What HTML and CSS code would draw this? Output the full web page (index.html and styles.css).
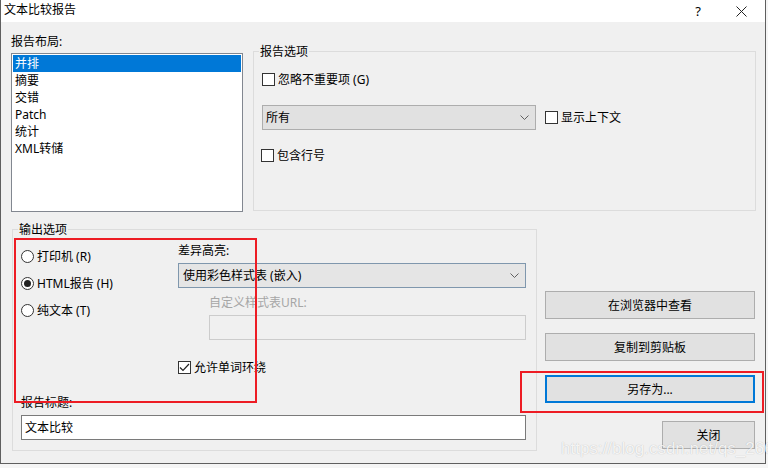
FILE: index.html
```html
<!DOCTYPE html>
<html lang="zh-CN">

<head>
    <meta charset="UTF-8">
    <meta name="viewport" content="width=device-width, initial-scale=1.0">
    <title>文本比较报告</title>
    <link rel="stylesheet" href="styles.css">
</head>

<body>
    <div class="screen">
        <div class="window">
            <!-- 标题栏 -->
            <div class="titlebar">
                <span class="title">文本比较报告</span>
                <span class="tb-btn help">?</span>
                <span class="tb-btn close">
                    <svg width="11" height="11" viewBox="0 0 11 11">
                        <path d="M0.5 0.5 L10.5 10.5 M10.5 0.5 L0.5 10.5" stroke="#222" stroke-width="1" fill="none" />
                    </svg>
                </span>
            </div>

            <div class="body">
                <!-- 上半部分 -->
                <div class="top">
                    <div class="layout-col">
                        <div class="label">报告布局:</div>
                        <ul class="listbox">
                            <li class="selected">并排</li>
                            <li>摘要</li>
                            <li>交错</li>
                            <li>Patch</li>
                            <li>统计</li>
                            <li>XML转储</li>
                        </ul>
                    </div>

                    <fieldset class="group report-opts">
                        <legend>报告选项</legend>
                        <div class="check-row first">
                            <span class="box"></span>
                            <span>忽略不重要项 (G)</span>
                        </div>
                        <div class="combo-row">
                            <div class="combo combo-all">
                                <span>所有</span>
                                <svg class="chev" width="9" height="5" viewBox="0 0 9 5">
                                    <path d="M0.5 0.5 L4.5 4.5 L8.5 0.5" stroke="#606060" fill="none" />
                                </svg>
                            </div>
                            <div class="check-row">
                                <span class="box"></span>
                                <span>显示上下文</span>
                            </div>
                        </div>
                        <div class="check-row lineno">
                            <span class="box"></span>
                            <span>包含行号</span>
                        </div>
                    </fieldset>
                </div>

                <!-- 下半部分 -->
                <div class="bottom">
                    <fieldset class="group output-opts">
                        <legend>输出选项</legend>
                        <div class="out-grid">
                            <div class="radios">
                                <div class="radio-row">
                                    <span class="radio"></span>
                                    <span>打印机 (R)</span>
                                </div>
                                <div class="radio-row">
                                    <span class="radio on"></span>
                                    <span>HTML报告 (H)</span>
                                </div>
                                <div class="radio-row">
                                    <span class="radio"></span>
                                    <span>纯文本 (T)</span>
                                </div>
                            </div>
                            <div class="highlight">
                                <div class="label">差异高亮:</div>
                                <div class="combo combo-style">
                                    <span>使用彩色样式表 (嵌入)</span>
                                    <svg class="chev" width="9" height="5" viewBox="0 0 9 5">
                                        <path d="M0.5 0.5 L4.5 4.5 L8.5 0.5" stroke="#606060" fill="none" />
                                    </svg>
                                </div>
                                <div class="label disabled indent">自定义样式表URL:</div>
                                <div class="textbox disabled-box indent"></div>
                                <div class="check-row wrap">
                                    <span class="box">
                                        <svg width="11" height="11" viewBox="0 0 11 11">
                                            <path d="M1 5.5 L4 8.5 L10 2" stroke="#222" stroke-width="1.2" fill="none" />
                                        </svg>
                                    </span>
                                    <span>允许单词环绕</span>
                                </div>
                            </div>
                        </div>
                        <div class="label title-label">报告标题:</div>
                        <div class="textbox">文本比较</div>
                    </fieldset>

                    <div class="buttons">
                        <div class="btn">在浏览器中查看</div>
                        <div class="btn">复制到剪贴板</div>
                        <div class="btn default">另存为...</div>
                        <div class="btn close-btn">关闭</div>
                    </div>
                </div>
            </div>
        </div>

        <!-- 红框标注 -->
        <div class="mark mark-left"></div>
        <div class="mark mark-right"></div>
        <div class="watermark">https://blog.csdn.net/qs_266</div>
    </div>
</body>

</html>
```

FILE: styles.css
```css
* {
    margin: 0;
    padding: 0;
    box-sizing: border-box;
}

html,
body {
    background-color: #f5f5f5;
}

body {
    font-family: "Segoe UI", "Noto Sans", "Noto Sans CJK SC", sans-serif;
    font-size: 12px;
    line-height: 17px;
    color: #000;
}

.screen {
    position: relative;
    width: 768px;
    height: 468px;
}

.window {
    width: 766px;
    border-left: 1px solid #5f5f5f;
    border-right: 1px solid #5f5f5f;
    border-bottom: 1px solid #5f5f5f;
}

/* 标题栏 */
.titlebar {
    height: 22px;
    background-color: #fff;
    display: flex;
    align-items: center;
}

.title {
    padding-left: 3px;
    margin-top: -4px;
}

.tb-btn {
    width: 46px;
    height: 22px;
    display: flex;
    align-items: center;
    justify-content: center;
}

.help {
    margin-left: auto;
    padding-left: 4px;
    font-size: 13px;
}

.close {
    padding-right: 2px;
}

.body {
    height: 441px;
    background-color: #f0f0f0;
    padding-top: 11px;
}

.label {
    height: 17px;
}

/* 上半部分 */
.top {
    display: grid;
    grid-template-columns: 232px 503px;
    column-gap: 10px;
    margin-left: 10px;
}

.layout-col .label {
    margin-bottom: 3px;
}

.listbox {
    height: 159px;
    background-color: #fff;
    border: 1px solid #828790;
    padding: 1px;
}

.listbox li {
    list-style: none;
    height: 17px;
    padding-left: 2px;
}

.listbox li.selected {
    background-color: #0078d7;
    color: #fff;
}

.group {
    border: 1px solid #dcdcdc;
    min-width: 0;
}

.group legend {
    padding: 0 1px;
    margin-left: -3px;
    line-height: 17px;
}

.report-opts {
    margin-top: 10px;
    height: 168px;
    padding: 0 8px;
}

.check-row {
    display: flex;
    align-items: center;
    height: 17px;
    gap: 3px;
}

.check-row.first {
    margin-top: 11px;
}

.check-row.lineno {
    margin-top: 17px;
    margin-left: -1px;
}

.box {
    width: 13px;
    height: 13px;
    border: 1px solid #333;
    background-color: #fff;
    display: flex;
    align-items: center;
    justify-content: center;
}

.combo-row {
    display: flex;
    align-items: center;
    gap: 9px;
    margin-top: 17px;
}

.combo {
    height: 25px;
    display: flex;
    align-items: center;
    justify-content: space-between;
    padding: 0 6px 0 3px;
}

.combo-all {
    width: 274px;
    background-color: #e1e1e1;
    border: 1px solid #adadad;
}

.combo-style {
    background-color: #e5e5e5;
    border: 1px solid #7f97ad;
    padding-left: 4px;
    margin-top: 4px;
}

/* 下半部分 */
.bottom {
    display: grid;
    grid-template-columns: 525px 210px;
    column-gap: 8px;
    margin-left: 11px;
    margin-top: 9px;
}

.output-opts {
    height: 230px;
    padding: 0 10px 9px 8px;
}

.out-grid {
    display: grid;
    grid-template-columns: 157px 1fr;
    margin-top: 4px;
}

.radios {
    padding-top: 6px;
}

.radio-row {
    display: flex;
    align-items: center;
    height: 17px;
    gap: 3px;
    margin-bottom: 10px;
}

.radio {
    width: 13px;
    height: 13px;
    border: 1px solid #333;
    border-radius: 50%;
    background-color: #fff;
    display: flex;
    align-items: center;
    justify-content: center;
}

.radio.on::after {
    content: "";
    width: 7px;
    height: 7px;
    border-radius: 50%;
    background-color: #222;
}

.indent {
    margin-left: 31px;
}

.label.disabled {
    color: #a6a6a6;
    margin-top: 6px;
}

.textbox {
    height: 25px;
    background-color: #fff;
    border: 1px solid #7a7a7a;
    padding-left: 3px;
    line-height: 23px;
}

.disabled-box {
    margin-top: 4px;
    background-color: #f0f0f0;
    border-color: #cccccc;
}

.check-row.wrap {
    margin-top: 19px;
}

.title-label {
    margin-top: 18px;
    margin-bottom: 4px;
    padding-left: 0;
}

/* 按钮 */
.buttons {
    display: flex;
    flex-direction: column;
    padding-top: 70px;
}

.btn {
    height: 28px;
    background-color: #e1e1e1;
    border: 1px solid #adadad;
    display: flex;
    align-items: center;
    justify-content: center;
    margin-bottom: 14px;
}

.btn.default {
    border: 2px solid #0078d7;
    margin-bottom: 18px;
}

.btn.close-btn {
    width: 93px;
    align-self: flex-end;
}

/* 标注 */
.mark {
    position: absolute;
    border: 2px solid #ed1c24;
}

.mark-left {
    left: 14px;
    top: 238px;
    width: 243px;
    height: 165px;
}

.mark-right {
    left: 520px;
    top: 371px;
    width: 244px;
    height: 42px;
}

.watermark {
    position: absolute;
    left: 561px;
    top: 439px;
    font-family: "Liberation Sans", Arial, sans-serif;
    font-size: 17px;
    line-height: 20px;
    color: rgba(255, 255, 255, 0.85);
    text-shadow: 0 0 1px rgba(0, 0, 0, 0.25);
}
```
